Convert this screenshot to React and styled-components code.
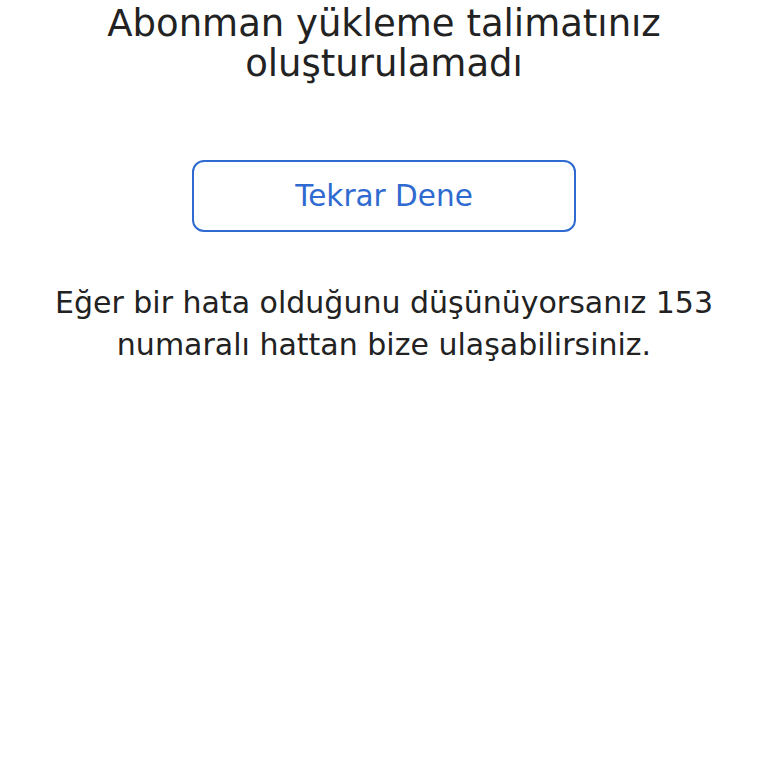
import React from 'react';
import styled, { createGlobalStyle } from 'styled-components';

const GlobalStyle = createGlobalStyle`
  body {
    margin: 0;
    background: #ffffff;
    font-family: "DejaVu Sans", "Noto Sans", sans-serif;
  }
`;

const Page = styled.main`
  display: flex;
  flex-direction: column;
  align-items: center;
  padding: 4px 16px 0;
`;

const Title = styled.h1`
  margin: 0;
  font-size: 37px;
  font-weight: 400;
  line-height: 40px;
  color: #222222;
  text-align: center;
  max-width: 640px;
`;

const RetryButton = styled.button`
  margin-top: 76px;
  width: 384px;
  height: 72px;
  border: 2px solid #2f6ad0;
  border-radius: 12px;
  background: #ffffff;
  color: #2f6ad0;
  font-family: inherit;
  font-size: 29.5px;
  cursor: pointer;
`;

const Info = styled.p`
  margin: 50px 0 0;
  font-size: 30px;
  line-height: 42px;
  color: #222222;
  text-align: center;
  max-width: 720px;
`;

const App = () => {
  return (
    <>
      <GlobalStyle />
      <Page>
        <Title>Abonman yükleme talimatınız oluşturulamadı</Title>
        <RetryButton>Tekrar Dene</RetryButton>
        <Info>
          Eğer bir hata olduğunu düşünüyorsanız 153 numaralı hattan bize ulaşabilirsiniz.
        </Info>
      </Page>
    </>
  );
};

export default App;
